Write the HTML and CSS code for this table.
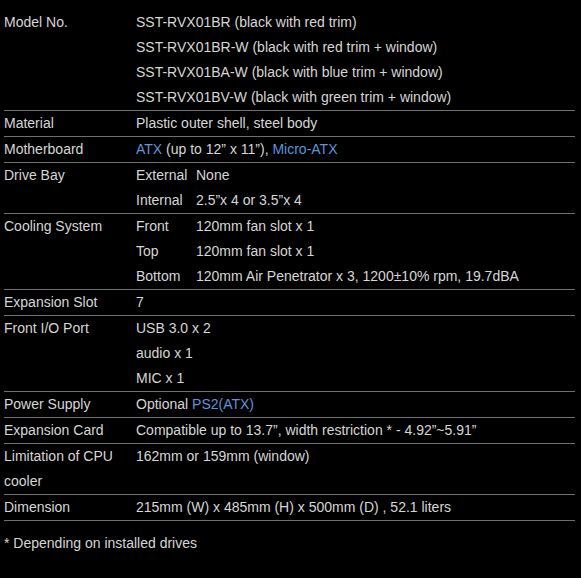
FILE: index.html
```html
<!DOCTYPE html>
<html>
<head>
<meta charset="utf-8">
<link rel="stylesheet" href="styles.css">
</head>
<body>
<div class="page">
<table class="spec">
<tr><th>Model No.</th><td>SST-RVX01BR (black with red trim)<br>SST-RVX01BR-W (black with red trim + window)<br>SST-RVX01BA-W (black with blue trim + window)<br>SST-RVX01BV-W (black with green trim + window)</td></tr>
<tr><th>Material</th><td>Plastic outer shell, steel body</td></tr>
<tr><th>Motherboard</th><td><a class="link">ATX</a> (up to 12” x 11”), <a class="link">Micro-ATX</a></td></tr>
<tr><th>Drive Bay</th><td><div class="sub"><span>External</span><span>None</span><span>Internal</span><span>2.5”x 4 or 3.5”x 4</span></div></td></tr>
<tr><th>Cooling System</th><td><div class="sub"><span>Front</span><span>120mm fan slot x 1</span><span>Top</span><span>120mm fan slot x 1</span><span>Bottom</span><span>120mm Air Penetrator x 3, 1200±10% rpm, 19.7dBA</span></div></td></tr>
<tr><th>Expansion Slot</th><td>7</td></tr>
<tr><th>Front I/O Port</th><td>USB 3.0 x 2<br>audio x 1<br>MIC x 1</td></tr>
<tr><th>Power Supply</th><td>Optional <a class="link">PS2(ATX)</a></td></tr>
<tr><th>Expansion Card</th><td>Compatible up to 13.7”, width restriction * - 4.92”~5.91”</td></tr>
<tr><th>Limitation of CPU cooler</th><td>162mm or 159mm (window)</td></tr>
<tr><th>Dimension</th><td>215mm (W) x 485mm (H) x 500mm (D) , 52.1 liters</td></tr>
</table>
<p class="note">* Depending on installed drives</p>
</div>
</body>
</html>
```

FILE: styles.css
```css
html, body {
  margin: 0;
  background: #000;
}
body {
  font-family: "Liberation Sans", Arial, sans-serif;
  font-size: 14px;
  line-height: 25px;
  color: #d6d6d6;
}
.page {
  padding: 10px 6px 0 4px;
}
.spec {
  width: 571px;
  border-collapse: collapse;
}
.spec th,
.spec td {
  padding: 0;
  text-align: left;
  vertical-align: top;
  font-weight: normal;
  border-bottom: 1px solid #6f6f6f;
}
.spec th {
  width: 132px;
}
.link {
  color: #5d95dc;
  text-decoration: none;
}
.sub {
  display: grid;
  grid-template-columns: 60px auto;
}
.note {
  margin: 10px 0 0;
}
```
